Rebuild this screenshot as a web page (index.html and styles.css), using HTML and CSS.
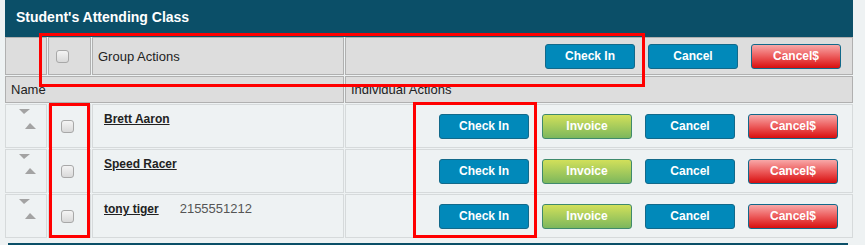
FILE: index.html
```html
<!DOCTYPE html>
<html>
<head>
    <title>Student's Attending Class</title>
    <link rel="stylesheet" href="styles.css">
</head>
<body>
    <div class="panel">
        <div class="panel-title">Student's Attending Class</div>

        <div class="grid-row group-row">
            <div class="cell"></div>
            <div class="cell group-check"><input type="checkbox" class="box"></div>
            <div class="cell label-cell">Group Actions</div>
            <div class="cell actions group-actions">
                <button class="btn btn-blue">Check In</button>
                <button class="btn btn-blue">Cancel</button>
                <button class="btn btn-red">Cancel$</button>
            </div>
        </div>

        <div class="grid-row head-row">
            <div class="cell label-cell">Name</div>
            <div class="cell label-cell">Individual Actions</div>
        </div>

        <div class="grid-row student-row">
            <div class="cell sort-cell"><span class="arrow-down"></span><span class="arrow-up"></span></div>
            <div class="cell row-check"><input type="checkbox" class="box"></div>
            <div class="cell name-cell"><a href="#" class="student">Brett Aaron</a></div>
            <div class="cell actions">
                <button class="btn btn-blue">Check In</button>
                <button class="btn btn-green">Invoice</button>
                <button class="btn btn-blue">Cancel</button>
                <button class="btn btn-red">Cancel$</button>
            </div>
        </div>

        <div class="grid-row student-row">
            <div class="cell sort-cell"><span class="arrow-down"></span><span class="arrow-up"></span></div>
            <div class="cell row-check"><input type="checkbox" class="box"></div>
            <div class="cell name-cell"><a href="#" class="student">Speed Racer</a></div>
            <div class="cell actions">
                <button class="btn btn-blue">Check In</button>
                <button class="btn btn-green">Invoice</button>
                <button class="btn btn-blue">Cancel</button>
                <button class="btn btn-red">Cancel$</button>
            </div>
        </div>

        <div class="grid-row student-row">
            <div class="cell sort-cell"><span class="arrow-down"></span><span class="arrow-up"></span></div>
            <div class="cell row-check"><input type="checkbox" class="box"></div>
            <div class="cell name-cell"><a href="#" class="student">tony tiger</a><span class="phone">2155551212</span></div>
            <div class="cell actions">
                <button class="btn btn-blue">Check In</button>
                <button class="btn btn-green">Invoice</button>
                <button class="btn btn-blue">Cancel</button>
                <button class="btn btn-red">Cancel$</button>
            </div>
        </div>

        <!-- annotation boxes drawn over the table -->
        <div class="mark mark-group"></div>
        <div class="mark mark-checks"></div>
        <div class="mark mark-checkin"></div>
    </div>
    <div class="next-bar"></div>
</body>
</html>
```

FILE: styles.css
```css
body {
    font-family: "Liberation Sans", Arial, sans-serif;
    background-color: #eef2f3;
    margin: 0;
    padding: 0;
    color: #222;
}

.panel {
    position: relative;
    width: 848px;
    margin-left: 5px;
}

.panel-title {
    background-color: #0b4f68;
    color: white;
    font-weight: bold;
    font-size: 14px;
    height: 37px;
    line-height: 35px;
    padding-left: 11px;
    box-sizing: border-box;
}

.grid-row {
    display: grid;
    grid-template-columns: 42px 43px 252px 508px;
    column-gap: 1px;
    margin-bottom: 1px;
}

.head-row {
    grid-template-columns: 339px 508px;
}

.cell {
    box-sizing: border-box;
    border: 1px solid #b0b0b0;
    background-color: #dddddd;
    font-size: 13px;
}

.group-row .cell {
    height: 38px;
}

.head-row .cell {
    height: 27px;
}

.label-cell {
    display: flex;
    align-items: center;
    padding-left: 5px;
}

.student-row .cell {
    height: 44px;
    background-color: #eef2f3;
    border-color: #d6dadb;
}

.group-check {
    display: flex;
    align-items: center;
    padding-left: 7px;
}

.row-check {
    display: flex;
    align-items: center;
    padding-left: 12px;
}

.box {
    appearance: none;
    -webkit-appearance: none;
    width: 13px;
    height: 13px;
    margin: 0;
    border: 1px solid #a8a8a8;
    border-radius: 3px;
    background: linear-gradient(#f4f4f4, #d9d9d9);
}

.sort-cell {
    display: flex;
    flex-direction: column;
    align-items: flex-start;
}

.arrow-down {
    width: 0;
    height: 0;
    margin: 4px 0 0 13px;
    border-left: 5px solid transparent;
    border-right: 6px solid transparent;
    border-top: 5px solid #a3a3a3;
}

.arrow-up {
    width: 0;
    height: 0;
    margin: 9px 0 0 19px;
    border-left: 5px solid transparent;
    border-right: 6px solid transparent;
    border-bottom: 6px solid #a3a3a3;
}

.name-cell {
    padding: 6px 0 0 11px;
    line-height: 15px;
}

.student {
    color: #222;
    font-size: 12px;
    font-weight: bold;
}

.phone {
    margin-left: 21px;
    color: #555;
    font-size: 13px;
}

.actions {
    display: flex;
    justify-content: flex-end;
    align-items: center;
    gap: 13px;
    padding-right: 14px;
}

.group-actions {
    padding-right: 11px;
}

.btn {
    width: 90px;
    height: 25px;
    padding: 0;
    border: 1px solid #12698a;
    border-radius: 3px;
    color: white;
    font-family: "Liberation Sans", Arial, sans-serif;
    font-size: 12px;
    font-weight: bold;
    cursor: pointer;
}

.btn-blue {
    background-color: #0189ba;
}

.btn-green {
    background: linear-gradient(#d2e05a, #7cb75d);
    border-color: #3f8a6c;
}

.btn-red {
    background: linear-gradient(#f8a8a8, #ec5a5a 50%, #d80f0f);
}

.mark {
    position: absolute;
    box-sizing: border-box;
    border: 3px solid #ff0000;
}

.mark-group {
    left: 34px;
    top: 33px;
    width: 606px;
    height: 54px;
}

.mark-checks {
    left: 44px;
    top: 103px;
    width: 41px;
    height: 135px;
}

.mark-checkin {
    left: 408px;
    top: 102px;
    width: 124px;
    height: 136px;
}

.next-bar {
    width: 840px;
    height: 4px;
    margin: 5px 0 0 8px;
    background-color: #0b4f68;
}
```
